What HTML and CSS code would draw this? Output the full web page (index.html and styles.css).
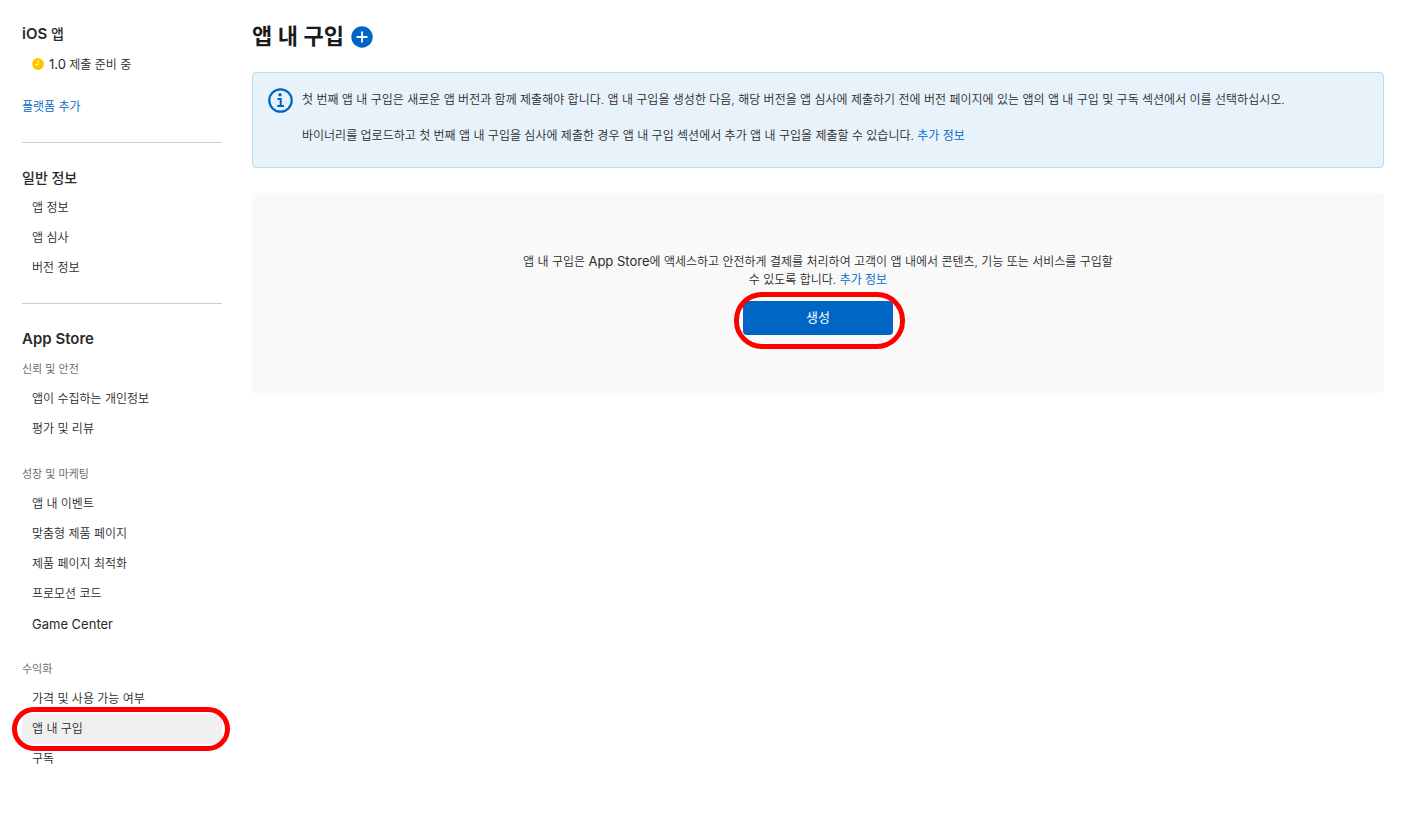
FILE: index.html
```html
<!DOCTYPE html>
<html lang="ko">
<head>
    <meta charset="UTF-8">
    <title>앱 내 구입</title>
    <link rel="stylesheet" href="styles.css">
</head>
<body>

    <nav class="sidebar">
        <section>
            <h2><span class="latin">iOS</span> 앱</h2>
            <ul>
                <li>
                    <a href="#" class="version">
                        <svg class="status" viewBox="0 0 12 12" aria-hidden="true">
                            <circle cx="6" cy="6" r="5.9" fill="#ffc600"/>
                            <path d="M6.2 2.6V6.4H3" fill="none" stroke="#fff" stroke-width="1"/>
                        </svg>
                        <span><span class="latin">1.0</span> 제출 준비 중</span>
                    </a>
                </li>
            </ul>
            <a href="#" class="add-platform">플랫폼 추가</a>
        </section>

        <section>
            <h2>일반 정보</h2>
            <ul>
                <li><a href="#">앱 정보</a></li>
                <li><a href="#">앱 심사</a></li>
                <li><a href="#">버전 정보</a></li>
            </ul>
        </section>

        <section>
            <h2><span class="latin">App Store</span></h2>
            <h3>신뢰 및 안전</h3>
            <ul>
                <li><a href="#">앱이 수집하는 개인정보</a></li>
                <li><a href="#">평가 및 리뷰</a></li>
            </ul>
            <h3>성장 및 마케팅</h3>
            <ul>
                <li><a href="#">앱 내 이벤트</a></li>
                <li><a href="#">맞춤형 제품 페이지</a></li>
                <li><a href="#">제품 페이지 최적화</a></li>
                <li><a href="#">프로모션 코드</a></li>
                <li><a href="#"><span class="latin">Game Center</span></a></li>
            </ul>
            <h3>수익화</h3>
            <ul>
                <li><a href="#">가격 및 사용 가능 여부</a></li>
                <li class="marked"><a href="#" class="current">앱 내 구입</a></li>
                <li><a href="#">구독</a></li>
            </ul>
        </section>
    </nav>

    <main>
        <header>
            <h1>앱 내 구입</h1>
            <button class="add" aria-label="앱 내 구입 추가">
                <svg viewBox="0 0 22 22" aria-hidden="true">
                    <circle cx="11" cy="11" r="10.7" fill="#0066c5"/>
                    <path d="M11 6.2V15.8M6.2 11H15.8" stroke="#fff" stroke-width="1.8" stroke-linecap="round"/>
                </svg>
            </button>
        </header>

        <div class="notice">
            <svg viewBox="0 0 25 25" aria-hidden="true">
                <circle cx="12.5" cy="12.5" r="11.2" fill="none" stroke="#0066c5" stroke-width="2.2"/>
                <circle cx="12" cy="6.8" r="1.7" fill="#0066c5"/>
                <path d="M9.4 11H12.7V18M9.2 18H16" fill="none" stroke="#0066c5" stroke-width="2"/>
            </svg>
            <div>
                <p>첫 번째 앱 내 구입은 새로운 앱 버전과 함께 제출해야 합니다. 앱 내 구입을 생성한 다음, 해당 버전을 앱 심사에 제출하기 전에 버전 페이지에 있는 앱의 앱 내 구입 및 구독 섹션에서 이를 선택하십시오.</p>
                <p>바이너리를 업로드하고 첫 번째 앱 내 구입을 심사에 제출한 경우 앱 내 구입 섹션에서 추가 앱 내 구입을 제출할 수 있습니다. <a href="#">추가 정보</a></p>
            </div>
        </div>

        <div class="empty">
            <p>앱 내 구입은 <span class="latin">App Store</span>에 액세스하고 안전하게 결제를 처리하여 고객이 앱 내에서 콘텐츠, 기능 또는 서비스를 구입할 수 있도록 합니다. <a href="#">추가 정보</a></p>
            <div class="marked">
                <button class="create">생성</button>
            </div>
        </div>
    </main>

</body>
</html>
```

FILE: styles.css
```css
* {
    box-sizing: border-box;
}

body {
    display: flex;
    gap: 30px;
    margin: 0;
    padding: 19px 36px 19px 22px;
    background-color: #fff;
    color: #2a2a2a;
    font-family: Inter, "Noto Sans CJK KR", sans-serif;
    font-size: 12px;
    font-weight: 350;
    line-height: 18px;
}

h1, h2, h3, p, ul {
    margin: 0;
    padding: 0;
}

a {
    color: #0066c5;
    text-decoration: none;
}

a:hover {
    text-decoration: underline;
}

button {
    border: none;
    padding: 0;
    font-family: inherit;
    cursor: pointer;
}

.latin {
    font-size: 13px;
    font-weight: 400;
}

/* Sidebar */

.sidebar {
    flex: 0 0 200px;
    line-height: 30px;
}

.sidebar section + section {
    margin-top: 20px;
    padding-top: 20px;
    border-top: 1px solid #ccc;
}

.sidebar h2 {
    height: 30px;
    font-size: 14px;
    font-weight: 500;
}

.sidebar h2 .latin {
    font-size: 15px;
    font-weight: 600;
}

.sidebar h3 {
    height: 30px;
    color: #6e6e6e;
    font-size: 11px;
    font-weight: 400;
}

.sidebar ul {
    list-style: none;
}

.sidebar ul + h3 {
    margin-top: 15px;
}

.sidebar li a {
    display: block;
    height: 30px;
    padding-left: 10px;
    color: #2a2a2a;
}

.sidebar li .version {
    display: flex;
    align-items: center;
    gap: 5px;
}

.sidebar li .current {
    background-color: #f0f0f0;
}

.status {
    width: 12px;
    height: 12px;
}

.add-platform {
    display: block;
    margin-top: 13px;
}

/* Red ring around the next step */

.marked {
    position: relative;
}

.marked::after {
    content: "";
    position: absolute;
    inset: -7px -8px -7px -10px;
    border: 5px solid #f00;
    border-radius: 22px;
    pointer-events: none;
}

.empty .marked::after {
    inset: -9px -12px -14px -9px;
    border-radius: 28px;
}

/* Main */

main {
    flex: 1;
    min-width: 0;
}

header {
    display: flex;
    align-items: center;
    gap: 7px;
    height: 35px;
    margin-bottom: 18px;
}

h1 {
    color: #1a1a1a;
    font-size: 22px;
    font-weight: 600;
    line-height: 35px;
}

.add {
    width: 22px;
    height: 22px;
    background: none;
}

.add svg {
    display: block;
}

.notice {
    display: flex;
    gap: 9px;
    padding: 15px 15px 22px;
    background-color: #e7f2fb;
    border: 1px solid #b9d9ef;
    border-radius: 4px;
}

.notice svg {
    flex: 0 0 25px;
    height: 25px;
}

.notice div {
    display: grid;
    gap: 18px;
    padding-top: 3px;
}

.empty {
    display: flex;
    flex-direction: column;
    align-items: center;
    gap: 12px;
    margin-top: 25px;
    padding: 59px 20px 58px;
    background-color: #f9f9f9;
    border-radius: 4px;
}

.empty p {
    max-width: 600px;
    text-align: center;
}

.create {
    display: block;
    width: 150px;
    height: 34px;
    padding-bottom: 3px;
    background-color: #0066c5;
    border-radius: 4px;
    color: #fff;
    font-size: 13px;
}
```
